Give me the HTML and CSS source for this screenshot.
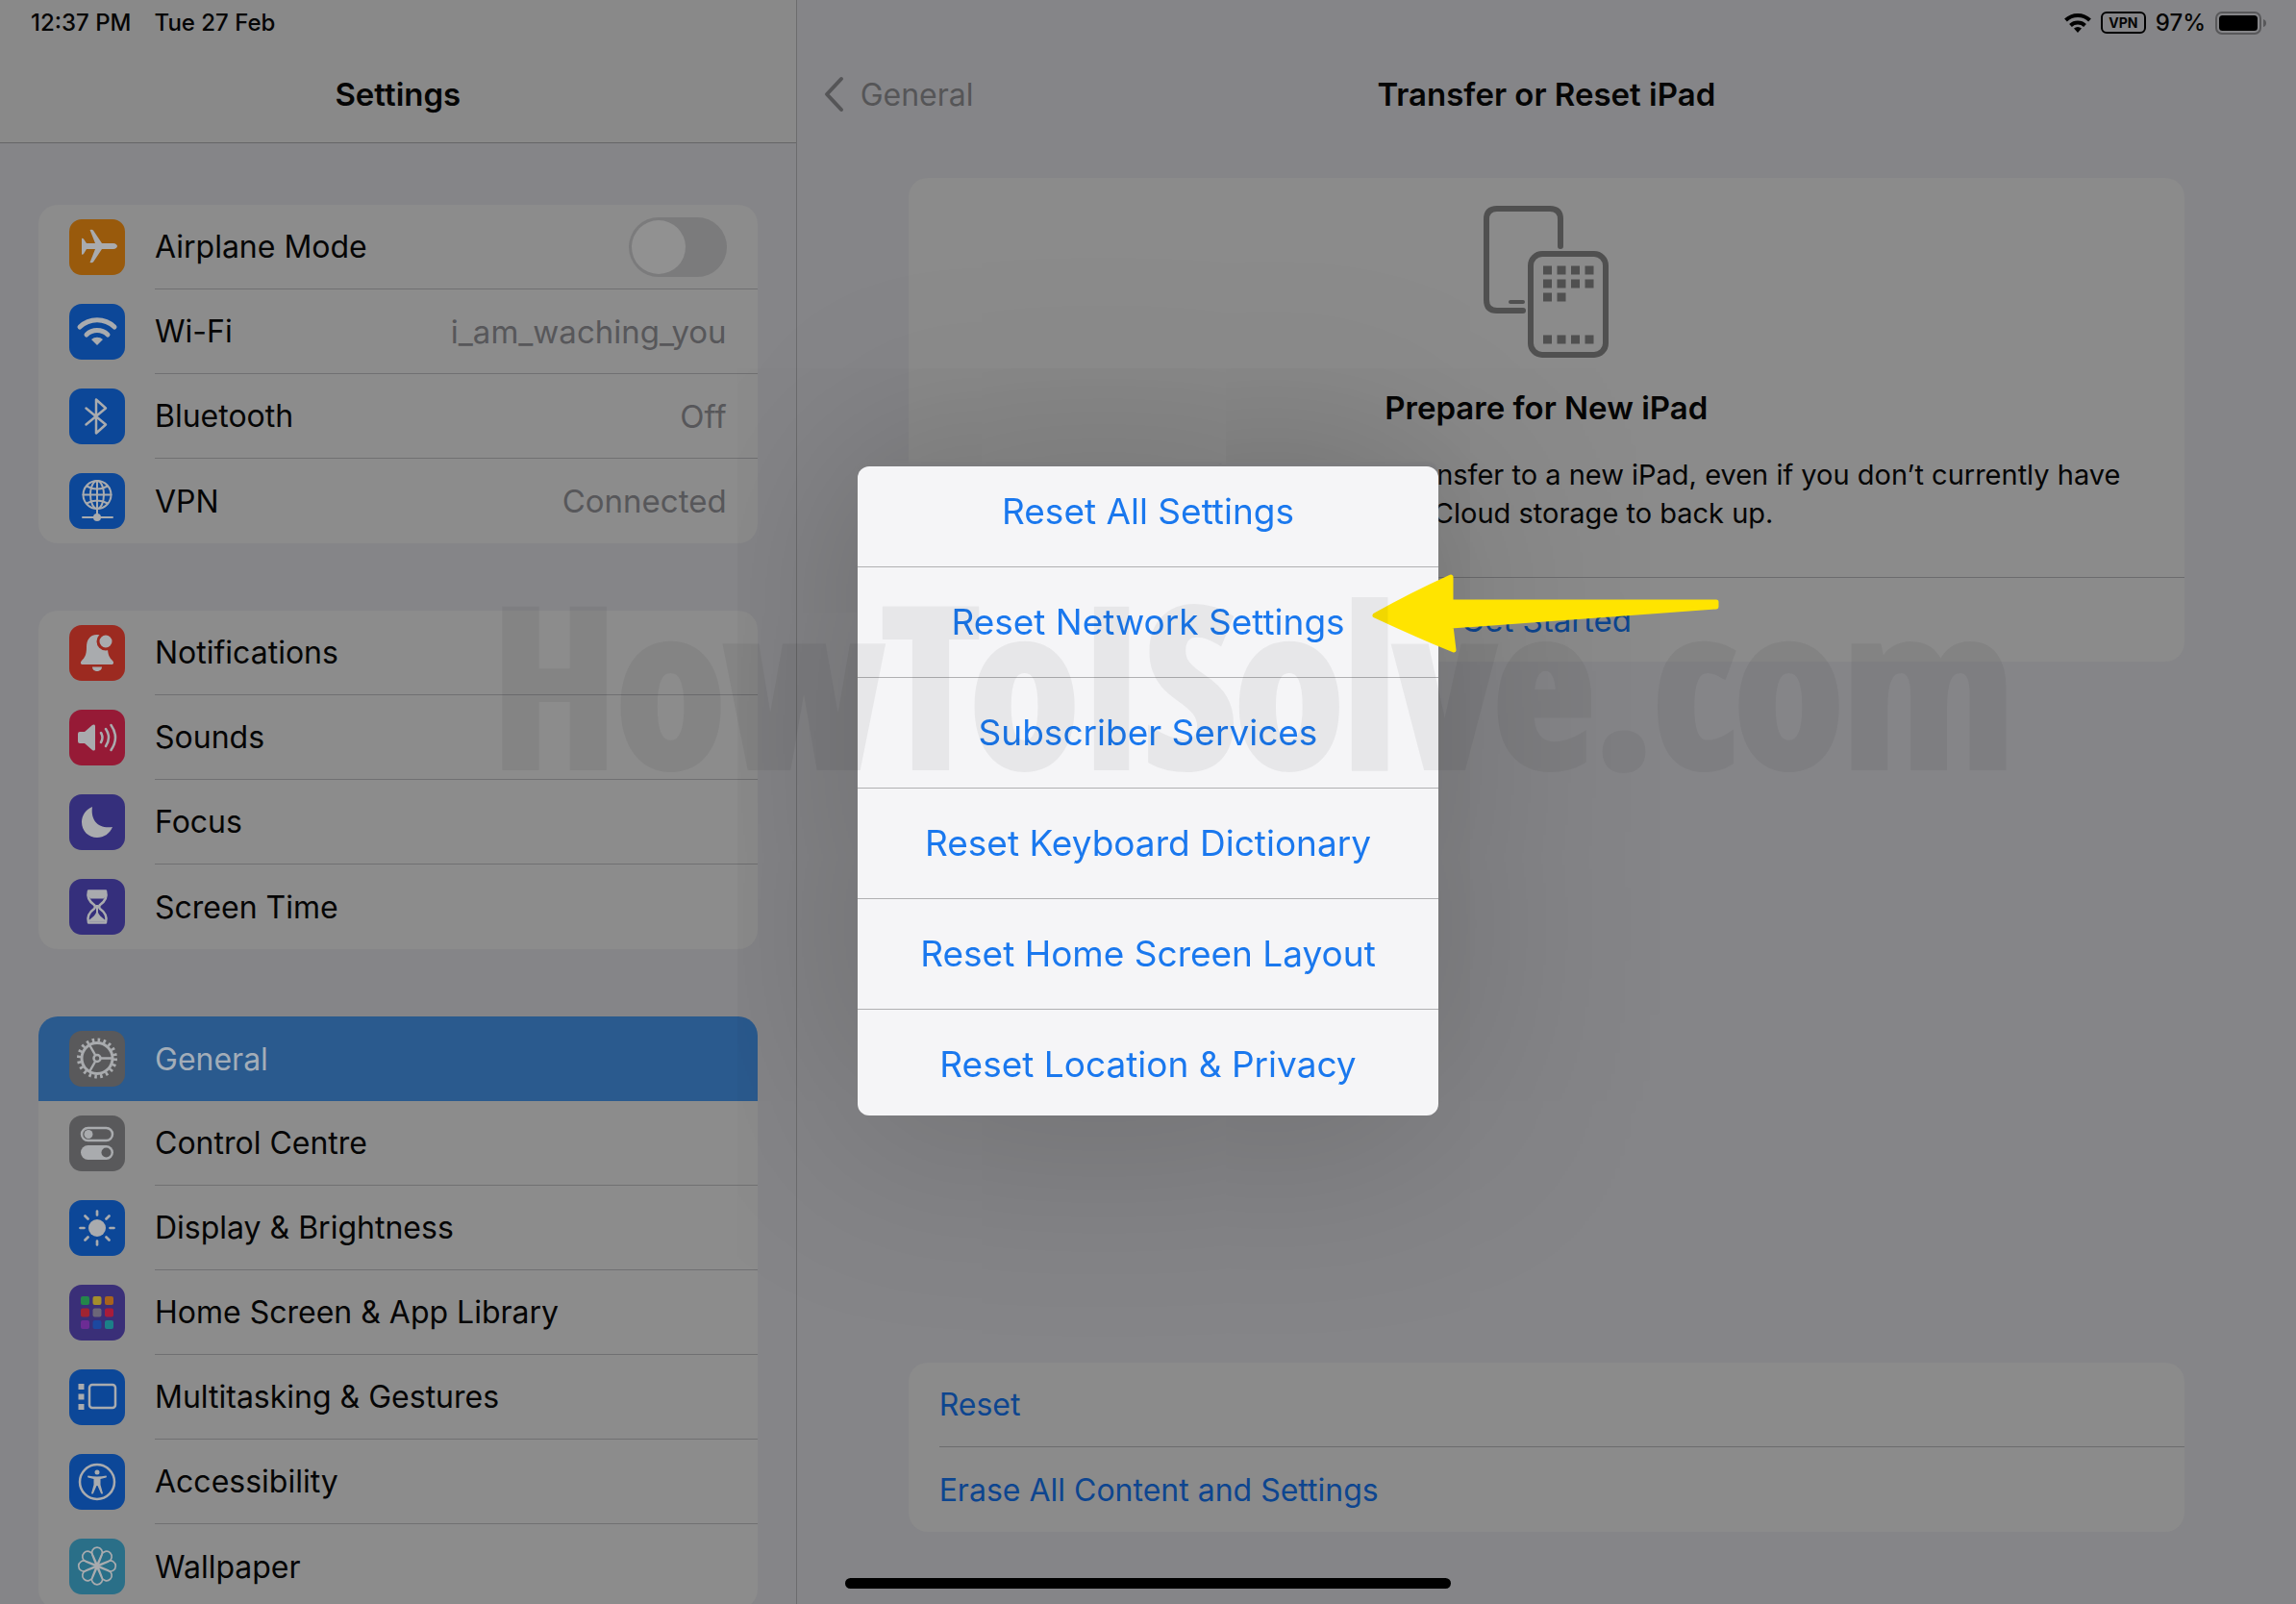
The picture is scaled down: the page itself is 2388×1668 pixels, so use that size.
FILE: index.html
```html
<!DOCTYPE html>
<html lang="en">
<head>
    <meta charset="UTF-8">
    <meta name="viewport" content="width=device-width, initial-scale=1.0">
    <title>Transfer or Reset iPad</title>
    <link rel="stylesheet" href="styles.css">
</head>
<body>
    <div class="screen">
        <aside class="sidebar">
            <header class="sidebar-header">
                <div class="status">
                    <span>12:37 PM</span>
                    <span>Tue 27 Feb</span>
                </div>
                <h1 class="title">Settings</h1>
            </header>
            <nav class="groups">
                <div class="group">
                    <div class="row">
                        <svg class="icon orange" viewBox="0 0 58 58"><path d="M46 25c2 0 4 1.500 4 3s-2 3-4 3H34L25 44.500q-1 1-3.500 .5L27 31H18l-3 5q-1 1-2 .5V20q1-.5 2 .5l3 4.500h9L21.500 11q2.500-.5 3.500 .5L34 25z"/></svg>
                        <div class="cell">
                            <label for="airplane">Airplane Mode</label>
                            <input class="toggle" type="checkbox" id="airplane">
                        </div>
                    </div>
                    <a class="row" href="#wifi">
                        <svg class="icon blue" viewBox="0 0 58 58"><path class="line" stroke-width="5" d="M11 24a26 26 0 0 1 36 0M18 32a16 16 0 0 1 22 0"/><path d="M29 43l-6-6a9 9 0 0 1 12 0z"/></svg>
                        <span class="cell">Wi-Fi <span class="value">i_am_waching_you</span></span>
                    </a>
                    <a class="row" href="#bluetooth">
                        <svg class="icon blue" viewBox="0 0 58 58"><path class="line" stroke-width="2.500" d="M17.500 20.500L38 37.500 28 46.500V11.500L38 20.500 17.500 37.500"/></svg>
                        <span class="cell">Bluetooth <span class="value">Off</span></span>
                    </a>
                    <a class="row" href="#vpn">
                        <svg class="icon blue" viewBox="0 0 58 58"><g class="line" stroke-width="2"><circle cx="29" cy="22.500" r="14.500"/><ellipse cx="29" cy="22.500" rx="7" ry="14.500"/><path d="M29 8v35M14.500 22.500h29M18 13.500q11 6 22 0M18 31.500q11-6 22 0M14 46h31"/></g><circle cx="29" cy="46" r="4"/></svg>
                        <span class="cell">VPN <span class="value">Connected</span></span>
                    </a>
                </div>

                <div class="group">
                    <a class="row" href="#notifications">
                        <svg class="icon red" viewBox="0 0 58 58"><path d="M29 10c-8 0-11 6-11 13 0 8-2 11-5 14-2 2-1 4 1 4h30c2 0 3-2 1-4-3-3-5-6-5-14 0-7-3-13-11-13zM24 43.500h10c0 6-10 6-10 0z"/><circle class="ring" cx="38" cy="17" r="8"/></svg>
                        <span class="cell">Notifications</span>
                    </a>
                    <a class="row" href="#sounds">
                        <svg class="icon pink" viewBox="0 0 58 58"><path d="M11 23h5l8-7c1.500-1 3-.5 3 1v24c0 1.500-1.500 2-3 1l-8-7h-5q-2 0-2-2v-8q0-2 2-2z"/><path class="line" stroke-width="2.500" d="M33 24q3 5 0 10M38 20q6 9 0 18M43.500 16q9 13 0 26"/></svg>
                        <span class="cell">Sounds</span>
                    </a>
                    <a class="row" href="#focus">
                        <svg class="icon indigo" viewBox="0 0 58 58"><path d="M24 13c-2 14 6 23 21 21-3 7-9 11-16 11-9 0-16-7-16-16 0-7 4-13 11-16z"/></svg>
                        <span class="cell">Focus</span>
                    </a>
                    <a class="row" href="#screen-time">
                        <svg class="icon indigo" viewBox="0 0 58 58"><path class="line" stroke-width="2.500" d="M20 12.500h18c2 7-1 11-6 14.500q-2 2 0 4c5 3.500 8 8 6 14.500H20c-2-6.500 1-11 6-14.500q2-2 0-4c-5-3.500-8-7.500-6-14.500z"/><path d="M20 12h18q1 5-2 8.500H22Q19 17 20 12zM28 27h2v8q1 3 7 7.500v2H21v-2q6-4.500 7-7.500z"/></svg>
                        <span class="cell">Screen Time</span>
                    </a>
                </div>

                <div class="group">
                    <a class="row selected" href="#general">
                        <svg class="icon gray" viewBox="0 0 58 58"><g class="line flat"><circle cx="29" cy="28.500" r="16" stroke-width="3"/><circle cx="29" cy="28.500" r="19" stroke-width="4" stroke-dasharray="2.570 3.400"/><circle cx="29" cy="28.500" r="3.500" stroke-width="2.500"/><path stroke-width="2.500" d="M33 28.500h12M27 25l-6-10.500M27 32l-6 10.500"/></g></svg>
                        <span class="cell">General</span>
                    </a>
                    <a class="row" href="#control-centre">
                        <svg class="icon gray" viewBox="0 0 58 58"><rect class="line" x="13" y="13" width="32" height="13" rx="6.500" stroke-width="2.500"/><circle cx="20" cy="19.500" r="4.500"/><rect x="12" y="31" width="34" height="15" rx="7.500"/><circle class="hole" cx="38.500" cy="38.500" r="5"/></svg>
                        <span class="cell">Control Centre</span>
                    </a>
                    <a class="row" href="#display">
                        <svg class="icon blue" viewBox="0 0 58 58"><circle cx="29" cy="29" r="9"/><path class="line" stroke-width="2.700" d="M29 11.500v4M29 42.500v4M11.500 29h4M42.500 29h4M16.500 16.500l3 3M38.500 38.500l3 3M16.500 41.500l3-3M38.500 19.500l3-3"/></svg>
                        <span class="cell">Display &amp; Brightness</span>
                    </a>
                    <a class="row" href="#home-screen">
                        <svg class="icon purple" viewBox="0 0 58 58">
                            <rect x="12" y="12" width="9" height="9" rx="2" fill="#24864a"/><rect x="24.500" y="12" width="9" height="9" rx="2" fill="#a48e2c"/><rect x="37" y="12" width="9" height="9" rx="2" fill="#a8621c"/>
                            <rect x="12" y="24.500" width="9" height="9" rx="2" fill="#a02432"/><rect x="24.500" y="24.500" width="9" height="9" rx="2" fill="#6c6678"/><rect x="37" y="24.500" width="9" height="9" rx="2" fill="#a81c3a"/>
                            <rect x="12" y="37" width="9" height="9" rx="2" fill="#6c2c94"/><rect x="24.500" y="37" width="9" height="9" rx="2" fill="#1c48a0"/><rect x="37" y="37" width="9" height="9" rx="2" fill="#1c8088"/>
                        </svg>
                        <span class="cell">Home Screen &amp; App Library</span>
                    </a>
                    <a class="row" href="#multitasking">
                        <svg class="icon blue" viewBox="0 0 58 58"><path d="M9.500 15h6v6h-6zM9.500 25.500h6v6h-6zM9.500 36h6v6h-6z"/><rect class="line" x="21" y="16" width="27" height="24" rx="3" stroke-width="2.500"/></svg>
                        <span class="cell">Multitasking &amp; Gestures</span>
                    </a>
                    <a class="row" href="#accessibility">
                        <svg class="icon blue" viewBox="0 0 58 58"><circle class="line" cx="29" cy="29" r="18" stroke-width="2.500"/><circle cx="29" cy="19" r="2.500"/><path d="M19.500 22.500q9.500 2 19 0 1 1 0 2l-6 1.500v6l2.500 9q-1 1-2 0l-3.500-8h-1l-3.500 8q-1 1-2 0l2.500-9v-6l-6-1.500q-1-1 0-2z"/></svg>
                        <span class="cell">Accessibility</span>
                    </a>
                    <a class="row" href="#wallpaper">
                        <svg class="icon teal" viewBox="0 0 58 58">
                            <defs><path id="petal" d="M29 30L24 17a5.500 5.500 0 1 1 10 0z"/></defs>
                            <g class="line" stroke-width="1.700">
                                <use href="#petal"/><use href="#petal" transform="rotate(45 29 28.500)"/><use href="#petal" transform="rotate(90 29 28.500)"/><use href="#petal" transform="rotate(135 29 28.500)"/>
                                <use href="#petal" transform="rotate(180 29 28.500)"/><use href="#petal" transform="rotate(225 29 28.500)"/><use href="#petal" transform="rotate(270 29 28.500)"/><use href="#petal" transform="rotate(315 29 28.500)"/>
                            </g>
                        </svg>
                        <span class="cell">Wallpaper</span>
                    </a>
                </div>
            </nav>
        </aside>

        <main class="detail">
            <header class="detail-header">
                <div class="status status-right">
                    <svg class="wifi" viewBox="0 0 28 22"><path fill="none" stroke="#000" stroke-width="4" d="M1.500 8a18 18 0 0 1 25 0M6.500 13.500a11 11 0 0 1 15 0"/><path d="M14 21l-4-4.500a6 6 0 0 1 8 0z"/></svg>
                    <span class="badge">VPN</span>
                    <span>97%</span>
                    <svg class="battery" viewBox="0 0 54 24"><rect x="1" y="1" width="46" height="22" rx="6" fill="none" stroke="#58585a" stroke-width="2"/><rect x="4" y="4" width="40" height="16" rx="3.500"/><path fill="#58585a" d="M50 8q3 1 3 4t-3 4z"/></svg>
                </div>
                <div class="navbar">
                    <a class="back" href="#general">
                        <svg class="chevron" viewBox="0 0 22 38"><path fill="none" stroke="#555557" stroke-width="4" stroke-linecap="round" stroke-linejoin="round" d="M19 3L4 19l15 16"/></svg>
                        General
                    </a>
                    <h2 class="title">Transfer or Reset iPad</h2>
                </div>
            </header>

            <section class="card prepare">
                <div class="prepare-body">
                    <svg class="devices" viewBox="0 0 130 158">
                        <g fill="none" stroke="#505050" stroke-width="6" stroke-linecap="round">
                            <path d="M80 42V14q0-11-11-11H14Q3 3 3 14v84q0 11 11 11h27"/>
                            <path stroke-width="4" d="M28 100h13"/>
                            <rect x="49" y="50" width="78" height="105" rx="12"/>
                        </g>
                        <g fill="none" stroke="#505050" stroke-width="9">
                            <path stroke-dasharray="9 5.500" d="M62 67h53M62 81h53M62 139h53"/>
                            <path stroke-dasharray="9 5.500" d="M62 95h24"/>
                        </g>
                    </svg>
                    <h3 class="title">Prepare for New iPad</h3>
                    <p>Make sure everything’s ready to transfer to a new iPad, even if you don’t currently have<br>enough iCloud storage to back up.</p>
                </div>
                <button class="started" type="button">Get Started</button>
            </section>

            <section class="card actions">
                <button type="button">Reset</button>
                <button type="button">Erase All Content and Settings</button>
            </section>
        </main>
    </div>

    <div class="overlay">
        <div class="popover" role="dialog" aria-label="Reset">
            <div class="menu">
                <div class="menu-list">
                    <button type="button">Reset All Settings</button>
                    <button type="button">Reset Network Settings</button>
                    <button type="button">Subscriber Services</button>
                    <button type="button">Reset Keyboard Dictionary</button>
                    <button type="button">Reset Home Screen Layout</button>
                    <button type="button">Reset Location &amp; Privacy</button>
                </div>
            </div>
            <svg class="arrow" viewBox="0 0 362 84"><path fill="#ffe400" stroke="#ffe400" stroke-width="5" stroke-linejoin="round" d="M3 43Q40 22 82 3L82 29 358 29v5L82 54 85 79Q48 64 3 43z"/></svg>
        </div>
    </div>
    <div class="watermark">HowToISolve.com</div>
    <div class="home-bar"></div>
</body>
</html>
```
FILE: styles.css
```css
* {
    box-sizing: border-box;
}
body {
    margin: 0;
    font-family: Inter, "Liberation Sans", sans-serif;
    font-size: 32px;
    color: #050505;
    background-color: #858588;
}
h1, h2, h3, p {
    margin: 0;
}
a {
    color: inherit;
    text-decoration: none;
}
button {
    border: none;
    background: none;
    font: inherit;
    color: #0d458f;
    cursor: pointer;
}
.screen {
    display: grid;
    grid-template-columns: 34.7% 1fr;
    height: 100vh;
    overflow: hidden;
}
.title {
    font-size: 33px;
    font-weight: 600;
    text-align: center;
}

/* Status bar */
.status {
    display: flex;
    align-items: center;
    gap: 24px;
    height: 47px;
    padding: 0 32px;
    font-size: 24px;
    font-weight: 500;
}
.status-right {
    justify-content: flex-end;
    gap: 10px;
    padding-right: 30px;
}
.wifi {
    width: 28px;
    height: 22px;
}
.badge {
    width: 47px;
    height: 23px;
    border: 2px solid #000;
    border-radius: 6px;
    font-size: 14px;
    font-weight: 700;
    line-height: 19px;
    text-align: center;
}
.battery {
    width: 54px;
    height: 24px;
}

/* Sidebar */
.sidebar {
    display: flex;
    flex-direction: column;
    min-height: 0;
    border-right: 1px solid #6c6c6e;
}
.sidebar-header {
    height: 149px;
    flex-shrink: 0;
    background-color: #898989;
    border-bottom: 1px solid #656567;
}
.sidebar-header .title {
    line-height: 102px;
}
.groups {
    flex: 1;
    min-height: 0;
    overflow: hidden;
    padding: 64px 40px 0;
}
.group {
    margin-bottom: 70px;
    border-radius: 20px;
    background-color: #8c8c8c;
    overflow: hidden;
}
.row {
    display: flex;
    align-items: center;
    gap: 31px;
    height: 88px;
    padding-left: 32px;
}
.cell {
    display: flex;
    flex: 1;
    align-items: center;
    justify-content: space-between;
    height: 88px;
    padding-right: 32px;
    border-bottom: 1px solid #707072;
}
.row:last-child .cell, .selected .cell {
    border-bottom: none;
}
.value {
    font-size: 33px;
    color: #57575a;
}
.selected {
    background-color: #2a5a8e;
    color: #a3adb8;
}
.toggle {
    appearance: none;
    width: 102px;
    height: 62px;
    margin: 0;
    padding: 3px;
    border-radius: 31px;
    background-color: #7b7b7c;
}
.toggle::before {
    content: "";
    display: block;
    width: 56px;
    height: 56px;
    border-radius: 50%;
    background-color: #919191;
}
.toggle:checked::before {
    margin-left: auto;
}

/* Row icons */
.icon {
    width: 58px;
    height: 58px;
    flex-shrink: 0;
    border-radius: 13px;
    fill: #a9abae;
}
.line {
    fill: none;
    stroke: #a9abae;
    stroke-linecap: round;
    stroke-linejoin: round;
}
.flat {
    stroke-linecap: butt;
}
.ring {
    stroke: #9c2a20;
    stroke-width: 3px;
}
.hole {
    fill: #59595b;
}
.orange { background-color: #995a0c; }
.blue { background-color: #0c4798; }
.red { background-color: #9c2a20; }
.pink { background-color: #961a36; }
.indigo { background-color: #352f7c; }
.purple { background-color: #3a2f78; }
.gray { background-color: #59595b; }
.teal { background-color: #2a6f88; }

/* Detail pane */
.detail {
    display: flex;
    flex-direction: column;
    padding-bottom: 75px;
}
.detail-header {
    height: 185px;
}
.navbar {
    display: grid;
    grid-template-columns: 1fr auto 1fr;
    align-items: center;
    height: 102px;
}
.back {
    display: flex;
    align-items: center;
    gap: 17px;
    padding-left: 27px;
    color: #555557;
}
.chevron {
    width: 22px;
    height: 38px;
}
.card {
    margin: 0 116px;
    border-radius: 20px;
    background-color: #8b8b8b;
}
.prepare-body {
    display: flex;
    flex-direction: column;
    align-items: center;
    padding: 29px 32px 46px;
    border-bottom: 1px solid #6c6c6e;
}
.devices {
    width: 130px;
    height: 158px;
}
.prepare .title {
    margin-top: 30px;
    line-height: 44px;
}
.prepare p {
    margin-top: 28px;
    font-size: 29px;
    line-height: 40px;
    text-align: center;
    white-space: nowrap;
}
.started {
    display: block;
    width: 100%;
    height: 87px;
    font-size: 33px;
}
.actions {
    margin-top: auto;
    padding-left: 32px;
}
.actions button {
    display: block;
    width: 100%;
    height: 88px;
    padding: 0;
    text-align: left;
}
.actions button:first-child {
    border-bottom: 1px solid #6c6c6e;
}

/* Reset menu */
.overlay {
    position: fixed;
    inset: 0;
    display: flex;
    align-items: center;
    justify-content: center;
    padding-bottom: 24px;
}
.popover {
    position: relative;
    width: 604px;
    border-radius: 12px;
    box-shadow: 0 -5px 3px #7c7c7e, 0 0 220px rgba(0, 0, 0, 0.25);
}
.menu {
    height: 675px;
    overflow: hidden;
    border-radius: 12px;
    background-color: #f5f5f7;
}
.menu-list {
    margin-top: -10px;
}
.menu button {
    display: block;
    width: 100%;
    height: 115px;
    border-bottom: 1px solid #b0b0b2;
    font-size: 37px;
    color: #1a78ee;
}
.arrow {
    position: absolute;
    left: 535px;
    top: 112px;
    width: 362px;
    height: 84px;
}

.watermark {
    position: fixed;
    top: 574px;
    left: 0;
    width: 100%;
    padding-left: 218px;
    font-family: "Open Sans Condensed", "DejaVu Sans Condensed", sans-serif;
    font-size: 228px;
    font-weight: 700;
    line-height: 270px;
    text-align: center;
    white-space: nowrap;
    color: #000;
    -webkit-text-stroke: 8px #000;
    opacity: 0.05;
    pointer-events: none;
}
.home-bar {
    position: fixed;
    bottom: 16px;
    left: 50%;
    width: 630px;
    height: 11px;
    margin-left: -315px;
    border-radius: 6px;
    background-color: #000;
}
```
